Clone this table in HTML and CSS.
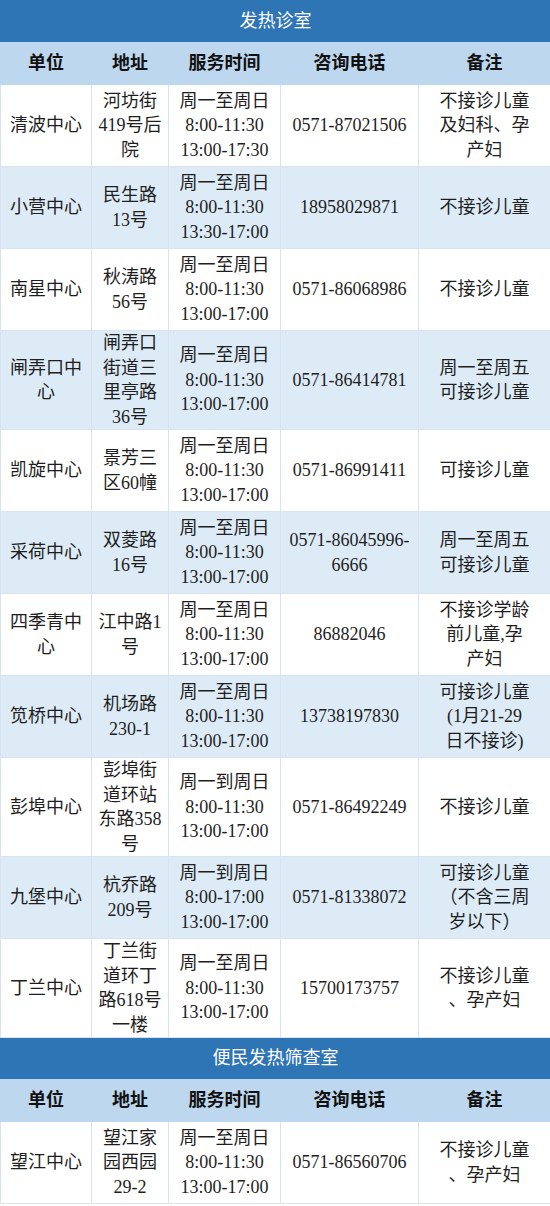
FILE: index.html
```html
<!DOCTYPE html>
<html lang="zh-CN">
<head>
<meta charset="utf-8">
<title>发热诊室</title>
<link rel="stylesheet" href="styles.css">
</head>
<body>
<table class="clinics">
  <colgroup>
    <col class="c-unit"><col class="c-addr"><col class="c-time"><col class="c-tel"><col class="c-note">
  </colgroup>
  <tbody>
    <tr class="title"><th colspan="5">发热诊室</th></tr>
    <tr class="head"><th>单位</th><th>地址</th><th>服务时间</th><th>咨询电话</th><th>备注</th></tr>
    <tr class="row"><td>清波中心</td><td>河坊街419号后院</td><td>周一至周日<br>8:00-11:30<br>13:00-17:30</td><td>0571-87021506</td><td>不接诊儿童<br>及妇科、孕<br>产妇</td></tr>
    <tr class="row alt"><td>小营中心</td><td>民生路13号</td><td>周一至周日<br>8:00-11:30<br>13:30-17:00</td><td>18958029871</td><td>不接诊儿童</td></tr>
    <tr class="row"><td>南星中心</td><td>秋涛路56号</td><td>周一至周日<br>8:00-11:30<br>13:00-17:00</td><td>0571-86068986</td><td>不接诊儿童</td></tr>
    <tr class="row alt"><td>闸弄口中心</td><td>闸弄口街道三里亭路36号</td><td>周一至周日<br>8:00-11:30<br>13:00-17:00</td><td>0571-86414781</td><td>周一至周五<br>可接诊儿童</td></tr>
    <tr class="row"><td>凯旋中心</td><td>景芳三区60幢</td><td>周一至周日<br>8:00-11:30<br>13:00-17:00</td><td>0571-86991411</td><td>可接诊儿童</td></tr>
    <tr class="row alt"><td>采荷中心</td><td>双菱路16号</td><td>周一至周日<br>8:00-11:30<br>13:00-17:00</td><td>0571-86045996-<br>6666</td><td>周一至周五<br>可接诊儿童</td></tr>
    <tr class="row"><td>四季青中心</td><td>江中路1号</td><td>周一至周日<br>8:00-11:30<br>13:00-17:00</td><td>86882046</td><td>不接诊学龄<br>前儿童,孕<br>产妇</td></tr>
    <tr class="row alt"><td>笕桥中心</td><td>机场路230-1</td><td>周一至周日<br>8:00-11:30<br>13:00-17:00</td><td>13738197830</td><td>可接诊儿童<br>(1月21-29<br>日不接诊)</td></tr>
    <tr class="row"><td>彭埠中心</td><td>彭埠街道环站东路358号</td><td>周一到周日<br>8:00-11:30<br>13:00-17:00</td><td>0571-86492249</td><td>不接诊儿童</td></tr>
    <tr class="row alt"><td>九堡中心</td><td>杭乔路209号</td><td>周一到周日<br>8:00-17:00<br>13:00-17:00</td><td>0571-81338072</td><td>可接诊儿童<br>（不含三周<br>岁以下）</td></tr>
    <tr class="row"><td>丁兰中心</td><td>丁兰街道环丁路618号一楼</td><td>周一至周日<br>8:00-11:30<br>13:00-17:00</td><td>15700173757</td><td>不接诊儿童<br>、孕产妇</td></tr>
    <tr class="title"><th colspan="5">便民发热筛查室</th></tr>
    <tr class="head"><th>单位</th><th>地址</th><th>服务时间</th><th>咨询电话</th><th>备注</th></tr>
    <tr class="row"><td>望江中心</td><td>望江家园西园29-2</td><td>周一至周日<br>8:00-11:30<br>13:00-17:00</td><td>0571-86560706</td><td>不接诊儿童<br>、孕产妇</td></tr>
  </tbody>
</table>
</body>
</html>
```
FILE: styles.css
```css
html, body {
  margin: 0;
  padding: 0;
  background: #ffffff;
}

.clinics {
  width: 550px;
  border-collapse: collapse;
  table-layout: fixed;
  font-family: "Liberation Serif", "Noto Sans CJK SC", serif;
  font-size: 18px;
  color: #1e1e1e;
}

.c-unit { width: 91px; }
.c-addr { width: 77px; }
.c-time { width: 112px; }
.c-tel { width: 138px; }
.c-note { width: 132px; }

.clinics th,
.clinics td {
  border: 1px solid #d9e2ee;
  text-align: center;
  vertical-align: middle;
  padding: 0 5px;
  line-height: 24.5px;
}

.title th {
  background: #2e75b6;
  color: #ffffff;
  font-weight: normal;
  height: 40px;
  padding: 0;
  border-color: #2e75b6;
}

.head th {
  background: #bdd7ee;
  font-weight: bold;
  height: 42px;
  padding: 0;
  border-color: #bdd7ee;
  color: #111111;
}

.row td {
  height: 81px;
}

.row.alt td {
  background: #ddebf7;
}
```
